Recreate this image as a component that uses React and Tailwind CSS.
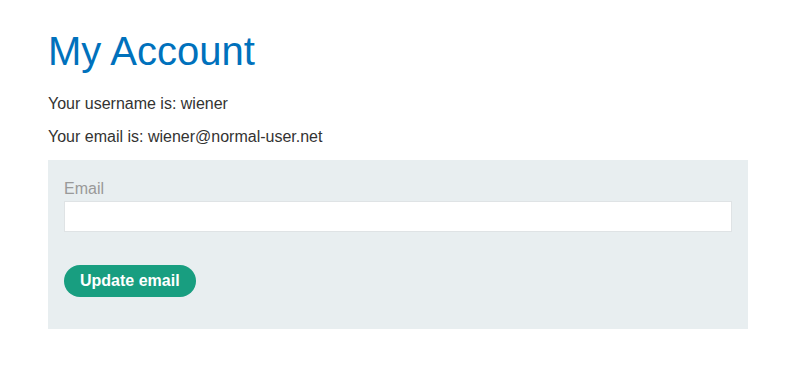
import React from "react";

export default function App() {
  return (
    <div className="min-h-[380px] bg-white px-12 pt-[29px] font-['Liberation_Sans',Arial,sans-serif] text-[#333332]">
      <h1 className="text-[40px] leading-[44px] text-[#0071bc]">My Account</h1>
      <p className="mt-[19px] text-base leading-6">Your username is: wiener</p>
      <p className="mt-[9px] text-base leading-6">Your email is: wiener@normal-user.net</p>
      <form
        className="mt-[11px] flex w-[700px] flex-col bg-[#e8eef0] px-4 pt-[17px] pb-8"
        onSubmit={(e) => e.preventDefault()}
      >
        <label className="text-base leading-6 text-[#999]">Email</label>
        <input
          type="email"
          name="email"
          className="h-[31px] w-full border border-[#dfe3e5] bg-white px-2 outline-none"
        />
        <div className="mt-[33px]">
          <button
            type="submit"
            className="h-8 rounded-full bg-[#189e80] px-4 text-base font-bold text-white"
          >
            Update email
          </button>
        </div>
      </form>
    </div>
  );
}
